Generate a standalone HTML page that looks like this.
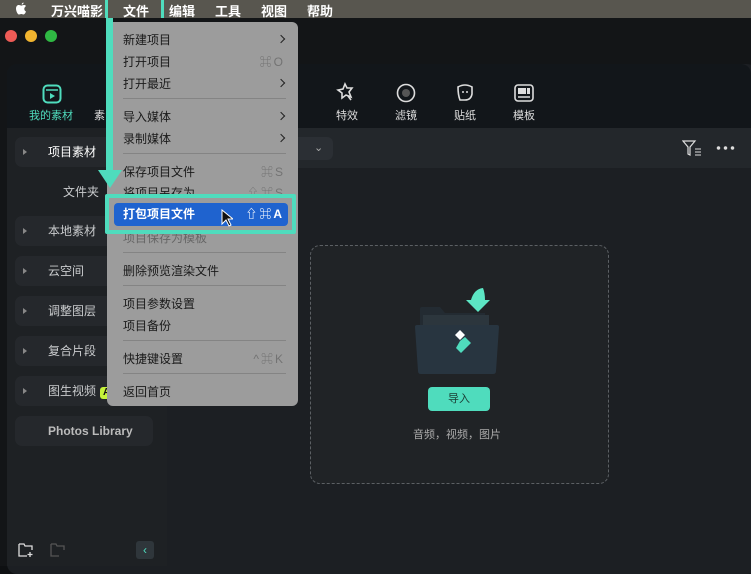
<!DOCTYPE html>
<html><head><meta charset="utf-8"><style>
*{margin:0;padding:0;box-sizing:border-box}
body{width:751px;height:566px;overflow:hidden;background:#0e1012;font-family:"Liberation Sans","Noto Sans CJK SC",sans-serif;position:relative}
.a{position:absolute}
.mb{left:0;top:0;width:751px;height:18px;background:#58564f;color:#fff;font-size:13px;font-weight:bold}
.mb span{position:absolute;top:1px}
.win{left:0;top:18px;width:751px;height:548px;background:#131517}
.panel{left:7px;top:64px;width:750px;height:510px;background:#1c1f23;border-radius:10px;overflow:hidden}
.tb{left:7px;top:64px;width:744px;height:64px;background:#12161a;border-radius:10px 10px 0 0}
.fb{left:167px;top:128px;width:584px;height:40px;background:#23272b}
.side{left:7px;top:128px;width:160px;height:438px;background:#1e2124}
.it{position:absolute;left:15px;width:138px;height:30px;background:#25282c;border-radius:7px;color:#c9cbcd;font-size:12px;line-height:30px;padding-left:33px}
.it.tri:before{content:"";position:absolute;left:8px;top:12px;border-left:4px solid #888;border-top:3px solid transparent;border-bottom:3px solid transparent}
.tl{font-size:11px;color:#ddd;position:absolute;top:107px}
.menu{left:107px;top:22px;width:191px;height:384px;background:#9c9c9c;border-radius:6px;color:#1a1a1a;font-size:12px}
.menu div.m{position:absolute;left:16px}
.menu .k{position:absolute;right:13px;color:#737373;letter-spacing:2px}
.menu .c{position:absolute;right:14px;width:6px;height:6px;border-right:1.6px solid #222;border-top:1.6px solid #222;transform:rotate(45deg)}
.sep{position:absolute;left:16px;width:163px;height:1px;background:#848484}
.teal{background:#4fdcbd}
</style></head><body>
<div class="a mb">
<svg class="a" style="left:15px;top:2px" width="13" height="14" viewBox="0 0 13 14"><path d="M9 3c-1 0-2 .6-2.6.6S4.7 3 3.8 3C2.3 3 1 4.3 1 6.6 1 9 2.6 12.5 4 12.5c.8 0 1.3-.5 2.3-.5s1.3.5 2.2.5c1 0 2-1.6 2.5-3-1.2-.5-1.7-1.6-1.7-2.7 0-1 .6-1.8 1.3-2.3C11.1 3.3 10 3 9 3zM8.6 0.5C7.6.6 6.6 1.4 6.7 2.6 7.8 2.7 8.7 1.7 8.6.5z" fill="#fff"/></svg>
<span style="left:51px">万兴喵影</span><span style="left:123px">文件</span><span style="left:169px">编辑</span><span style="left:215px">工具</span><span style="left:261px">视图</span><span style="left:307px">帮助</span></div>
<div class="a" style="left:105px;top:0;width:59px;height:22px;border:3px solid #4fdcbd;border-top:none"></div>
<div class="a win"></div>
<div class="a" style="left:5px;top:30px;width:12px;height:12px;border-radius:50%;background:#ee5b56"></div>
<div class="a" style="left:25px;top:30px;width:12px;height:12px;border-radius:50%;background:#f1b42f"></div>
<div class="a" style="left:45px;top:30px;width:12px;height:12px;border-radius:50%;background:#2fb843"></div>
<div class="a panel"></div>
<div class="a tb"></div>
<div class="a fb"></div>
<div class="a side"></div>
<svg class="a" style="left:42px;top:84px" width="20" height="20"><rect x="1.5" y="1.5" width="17" height="17" rx="4" fill="none" stroke="#4fdcbd" stroke-width="2"/><path d="M4 6h12" stroke="#4fdcbd" stroke-width="1.5"/><path d="M8 9l5 3-5 3z" fill="#4fdcbd"/></svg>
<div class="tl" style="left:29px;color:#4fdcbd">我的素材</div>
<div class="tl" style="left:94px">素</div>
<svg class="a" style="left:336px;top:82px" width="22" height="22"><path d="M9 2l2 4 5 0-3 4 2 5-5-2-4 3 0-5-4-3 5-1z" fill="none" stroke="#ddd" stroke-width="1.6"/><path d="M12 14l3 4" stroke="#ddd" stroke-width="1.6"/></svg>
<div class="tl" style="left:336px">特效</div>
<svg class="a" style="left:396px;top:83px" width="20" height="20"><circle cx="10" cy="10" r="8.5" fill="none" stroke="#ddd" stroke-width="1.6"/><circle cx="10" cy="10" r="4" fill="#555"/></svg>
<div class="tl" style="left:395px">滤镜</div>
<svg class="a" style="left:455px;top:83px" width="20" height="20"><path d="M3 4q7-4 14 0l0 7q-1 6-7 6l-5 0q-2-5-2-13z" fill="none" stroke="#ddd" stroke-width="1.6"/><circle cx="8" cy="9" r="1" fill="#ddd"/><circle cx="12" cy="9" r="1" fill="#ddd"/></svg>
<div class="tl" style="left:454px">贴纸</div>
<svg class="a" style="left:514px;top:84px" width="20" height="18"><rect x="1" y="1" width="18" height="16" rx="3" fill="none" stroke="#ddd" stroke-width="1.6"/><rect x="4" y="4" width="8" height="6" fill="#ddd"/><rect x="13" y="4" width="3" height="6" fill="#ddd"/><path d="M4 13h12" stroke="#ddd" stroke-width="1.5"/></svg>
<div class="tl" style="left:513px">模板</div>
<div class="a" style="left:280px;top:137px;width:53px;height:23px;background:#2b2f34;border-radius:6px;color:#aaa;font-size:11px;line-height:23px;padding-left:34px">⌄</div>
<svg class="a" style="left:682px;top:140px" width="20" height="17"><path d="M1 1h12l-5 6v8l-2-1V7z" fill="none" stroke="#ddd" stroke-width="1.2"/><path d="M13 9h6M13 12h6M13 15h6" stroke="#ddd" stroke-width="1"/></svg>
<div class="a" style="left:715px;top:146px;width:20px;height:4px;background:radial-gradient(circle,#ddd 1.5px,transparent 2px) 0 0/7px 4px repeat-x"></div>
<div class="it tri" style="top:137px;color:#fff">项目素材</div>
<div class="a" style="left:63px;top:183px;color:#c9cbcd;font-size:12px">文件夹</div>
<div class="it tri" style="top:216px">本地素材</div>
<div class="it tri" style="top:256px">云空间</div>
<div class="it tri" style="top:296px">调整图层</div>
<div class="it tri" style="top:336px">复合片段</div>
<div class="it tri" style="top:376px">图生视频<span style="display:inline-block;margin-left:4px;background:#c5f23a;color:#111;font-weight:bold;font-size:10px;line-height:12px;padding:0 3px;border-radius:3px">AI</span></div>
<div class="it" style="top:416px;padding-left:33px;font-weight:bold;color:#bbb">Photos Library</div>
<svg class="a" style="left:18px;top:542px" width="16" height="15"><path d="M1 2h5l1 2h7v4M1 2v12h8" fill="none" stroke="#ddd" stroke-width="1.3"/><path d="M12 10v5M9.5 12.5h5" stroke="#ddd" stroke-width="1.3"/></svg>
<svg class="a" style="left:50px;top:542px" width="16" height="15"><path d="M1 2h5l1 2h7v4M1 2v12h8" fill="none" stroke="#555" stroke-width="1.3"/></svg>
<div class="a" style="left:136px;top:541px;width:18px;height:18px;background:#2f363b;border-radius:3px;color:#4fdcbd;font-size:12px;text-align:center;line-height:18px">‹</div>
<div class="a" style="left:310px;top:245px;width:299px;height:239px;border:1px dashed #5c6064;border-radius:10px;background:#202326"></div>
<svg class="a" style="left:410px;top:285px" width="96" height="98"><path d="M10 24q0-2 2-2h18l5 6h40v18H10z" fill="#232b32"/><rect x="13" y="30" width="66" height="12" fill="#2c363d"/><path d="M5 42q0-2 2-2h80q2 0 2 2l-3 44q0 3-3 3H11q-3 0-3-3z" fill="#283540"/><path d="M45 50l5-5 5 5-5 5z" fill="#fff"/><path d="M50 56l5-4 6 6-10 10-5-5z" fill="#4fdcbd"/><path d="M73 3q-9 1-12 12h-5l12 12 12-12h-5q0-7 -2-12z" fill="#5ce6c4"/></svg>
<div class="a" style="left:428px;top:387px;width:62px;height:24px;background:#4fdcbd;border-radius:4px;color:#1c3d35;font-size:11px;text-align:center;line-height:24px">导入</div>
<div class="a" style="left:413px;top:426px;color:#aaa;font-size:11px">音频，视频，图片</div>
<div class="a menu">
<div class="m" style="top:9px">新建项目</div><div class="c" style="top:14px"></div>
<div class="m" style="top:31px">打开项目</div><div class="k" style="top:31px">⌘O</div>
<div class="m" style="top:53px">打开最近</div><div class="c" style="top:58px"></div>
<div class="sep" style="top:76px"></div>
<div class="m" style="top:86px">导入媒体</div><div class="c" style="top:91px"></div>
<div class="m" style="top:108px">录制媒体</div><div class="c" style="top:113px"></div>
<div class="sep" style="top:131px"></div>
<div class="m" style="top:141px">保存项目文件</div><div class="k" style="top:141px">⌘S</div>
<div class="m" style="top:162px">将项目另存为</div><div class="k" style="top:162px">⇧⌘S</div>
<div class="m" style="top:207px;color:#666">项目保存为模板</div>
<div class="sep" style="top:230px"></div>
<div class="m" style="top:240px">删除预览渲染文件</div>
<div class="sep" style="top:263px"></div>
<div class="m" style="top:273px">项目参数设置</div>
<div class="m" style="top:295px">项目备份</div>
<div class="sep" style="top:318px"></div>
<div class="m" style="top:328px">快捷键设置</div><div class="k" style="top:328px">^⌘K</div>
<div class="sep" style="top:351px"></div>
<div class="m" style="top:361px">返回首页</div>
</div>
<div class="a teal" style="left:106px;top:18px;width:7px;height:160px"></div>
<div class="a" style="left:98px;top:170px;border-left:12px solid transparent;border-right:12px solid transparent;border-top:18px solid #4fdcbd"></div>
<div class="a" style="left:105px;top:194px;width:191px;height:40px;border:4px solid #4fdcbd;border-radius:2px;background:#9c9c9c"></div>
<div class="a" style="left:114px;top:203px;width:174px;height:23px;background:#1f63cf;border-radius:4px;color:#fff;font-size:12px;font-weight:bold;line-height:23px;padding-left:9px">打包项目文件<span style="position:absolute;right:4px;letter-spacing:2px">⇧⌘A</span></div>
<svg class="a" style="left:221px;top:209px" width="12" height="18"><path d="M1 1v14l4-4 3 6 2-1-3-6h5z" fill="#111" stroke="#fff" stroke-width="1"/></svg>
</body></html>
